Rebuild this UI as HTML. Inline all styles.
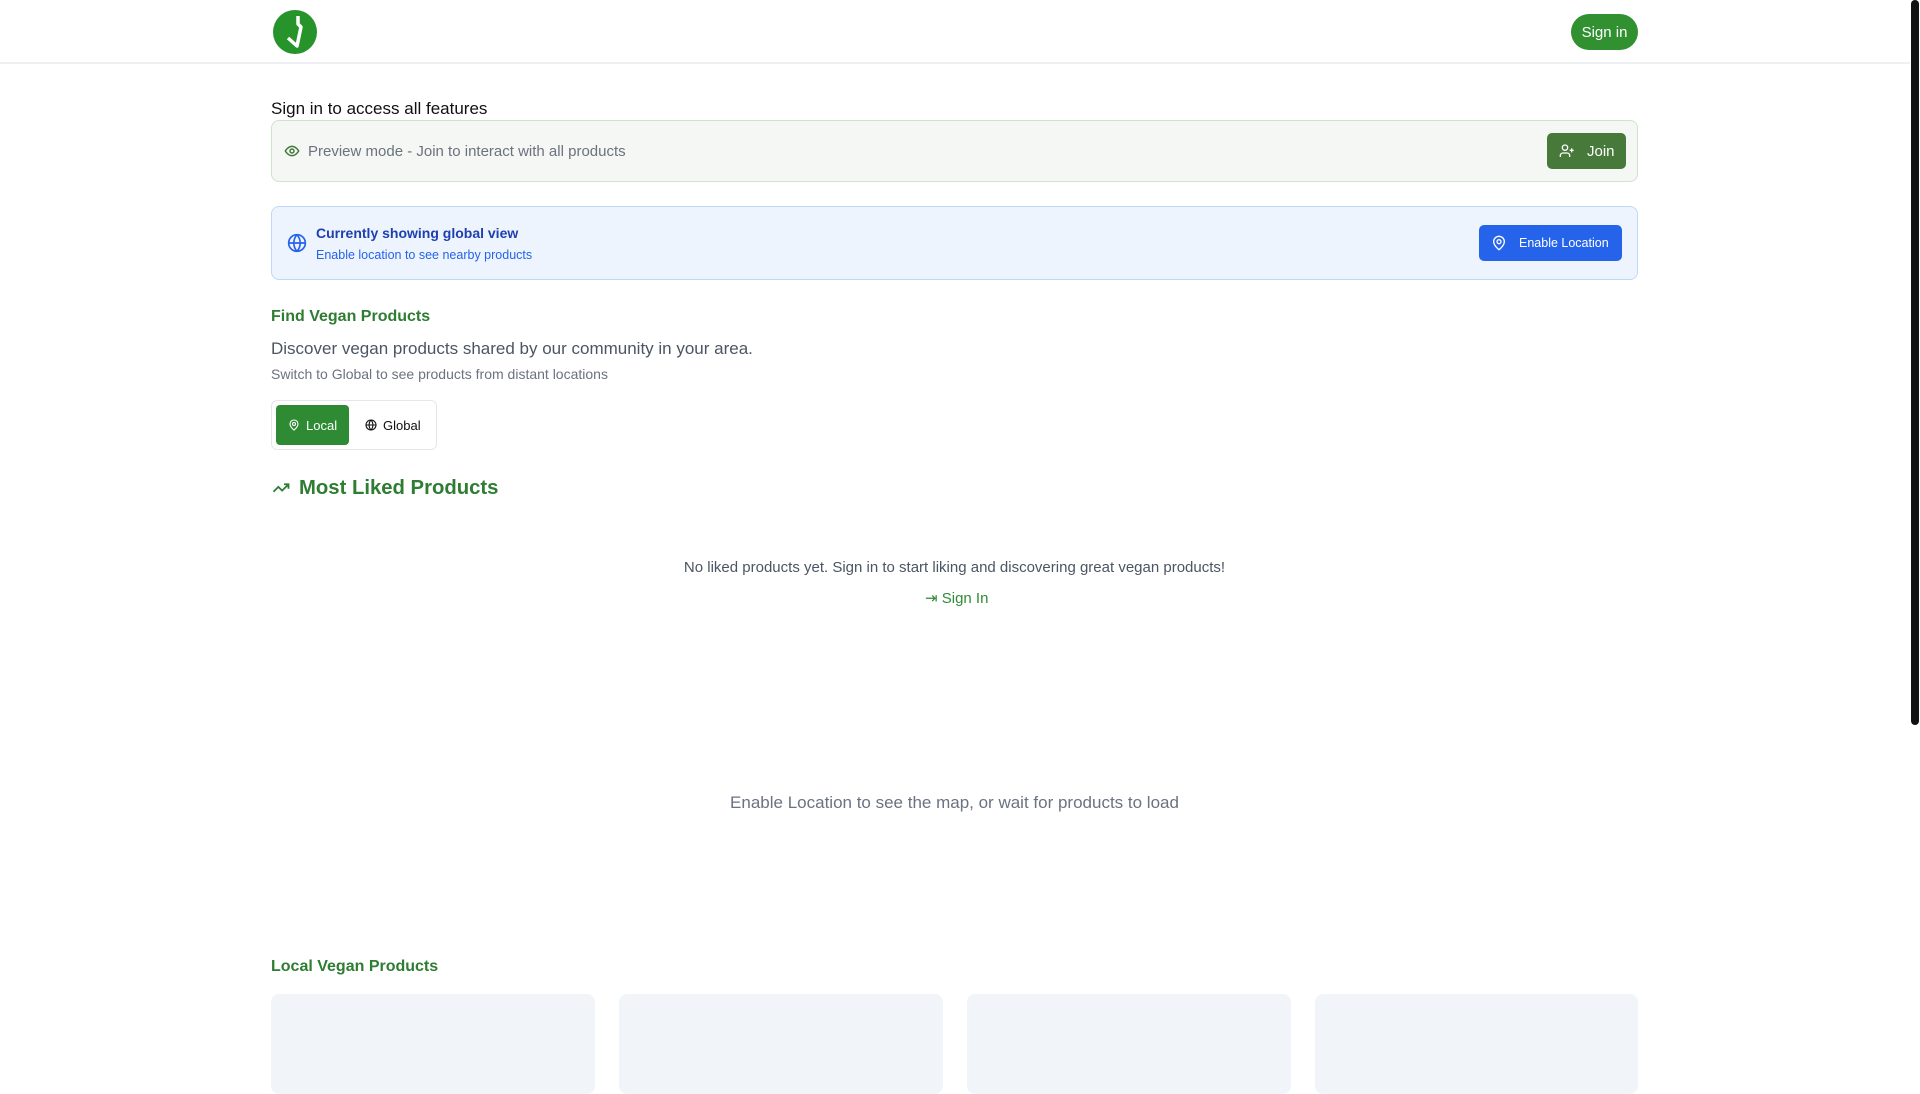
<!DOCTYPE html>
<html><head><meta charset="utf-8"><style>
*{box-sizing:border-box;margin:0;padding:0}
body{width:1920px;height:1080px;overflow:hidden;background:#fff;font-family:"Liberation Sans",sans-serif;position:relative}
.a{position:absolute}
.hdr{left:0;top:0;width:1910px;height:64px;border-bottom:2px solid #eef0f4}
.sb{left:1911px;top:0;width:8px;height:725px;background:#111;border-radius:4px}
.t{white-space:nowrap}
svg{display:block}
</style></head><body>
<div class="a hdr"></div>
<div class="a sb"></div>
<svg class="a" style="left:273px;top:10px" width="44" height="44" viewBox="0 0 44 44"><circle cx="22" cy="22" r="22" fill="#27932b"/><path d="M25 6 L25 14 L28 17 L24 36 L15 28" fill="none" stroke="#fff" stroke-width="3.5" stroke-linejoin="round"/></svg>
<div class="a t" style="left:1571px;top:14px;width:67px;height:36px;border-radius:18px;background:#319131;color:#fff;font-size:15px;line-height:37px;text-align:center">Sign in</div>

<div class="a t" style="left:271px;top:99px;font-size:17px;color:#111">Sign in to access all features</div>
<div class="a" style="left:271px;top:120px;width:1367px;height:62px;background:#f4f7f3;border:1px solid #cfe3cc;border-radius:8px"></div>
<svg class="a" style="left:284px;top:143px" width="16" height="16" viewBox="0 0 24 24" fill="none" stroke="#3f7a35" stroke-width="2.2"><path d="M2 12s4-7 10-7 10 7 10 7-4 7-10 7S2 12 2 12z"/><circle cx="12" cy="12" r="3"/></svg>
<div class="a t" style="left:308px;top:143px;font-size:15px;color:#6b7280">Preview mode - Join to interact with all products</div>
<div class="a" style="left:1547px;top:133px;width:79px;height:36px;background:#47793a;border-radius:5px"></div>
<svg class="a" style="left:1559px;top:143px" width="16" height="16" viewBox="0 0 24 24" fill="none" stroke="#fff" stroke-width="2"><circle cx="9" cy="7" r="4"/><path d="M2 21v-2a4 4 0 0 1 4-4h6a4 4 0 0 1 4 4v2M19 8v6M16 11h6"/></svg>
<div class="a t" style="left:1587px;top:143px;font-size:15px;color:#fff">Join</div>

<div class="a" style="left:271px;top:206px;width:1367px;height:74px;background:#eef4fe;border:1px solid #bfd7fb;border-radius:8px"></div>
<svg class="a" style="left:287px;top:233px" width="20" height="20" viewBox="0 0 24 24" fill="none" stroke="#2563eb" stroke-width="2"><circle cx="12" cy="12" r="10"/><path d="M2 12h20M12 2a15 15 0 0 1 0 20M12 2a15 15 0 0 0 0 20"/></svg>
<div class="a t" style="left:316px;top:225px;font-size:14px;font-weight:bold;color:#1e40af">Currently showing global view</div>
<div class="a t" style="left:316px;top:248px;font-size:12.5px;color:#2563eb">Enable location to see nearby products</div>
<div class="a" style="left:1479px;top:225px;width:143px;height:36px;background:#2563eb;border-radius:5px"></div>
<svg class="a" style="left:1491px;top:235px" width="16" height="16" viewBox="0 0 24 24" fill="none" stroke="#fff" stroke-width="2"><path d="M20 10c0 6-8 12-8 12s-8-6-8-12a8 8 0 0 1 16 0z"/><circle cx="12" cy="10" r="3"/></svg>
<div class="a t" style="left:1519px;top:236px;font-size:12.5px;color:#fff">Enable Location</div>

<div class="a t" style="left:271px;top:308px;font-size:16px;font-weight:bold;color:#2e7d32">Find Vegan Products</div>
<div class="a t" style="left:271px;top:339px;font-size:17px;color:#4b5563">Discover vegan products shared by our community in your area.</div>
<div class="a t" style="left:271px;top:366px;font-size:14px;color:#6b7280">Switch to Global to see products from distant locations</div>
<div class="a" style="left:271px;top:400px;width:166px;height:50px;border:1px solid #e5e7eb;border-radius:6px"></div>
<div class="a" style="left:276px;top:405px;width:73px;height:40px;background:#2e8b34;border-radius:4px"></div>
<svg class="a" style="left:288px;top:419px" width="12" height="12" viewBox="0 0 24 24" fill="none" stroke="#fff" stroke-width="2.2"><path d="M20 10c0 6-8 12-8 12s-8-6-8-12a8 8 0 0 1 16 0z"/><circle cx="12" cy="10" r="3"/></svg>
<div class="a t" style="left:306px;top:418px;font-size:13px;color:#fff">Local</div>
<svg class="a" style="left:365px;top:419px" width="12" height="12" viewBox="0 0 24 24" fill="none" stroke="#111" stroke-width="2.2"><circle cx="12" cy="12" r="10"/><path d="M2 12h20M12 2a15 15 0 0 1 0 20M12 2a15 15 0 0 0 0 20"/></svg>
<div class="a t" style="left:383px;top:418px;font-size:13px;color:#111">Global</div>

<svg class="a" style="left:271px;top:479px" width="20" height="18" viewBox="0 0 24 24" fill="none" stroke="#2e7d32" stroke-width="2.4"><path d="M22 7l-8.5 8.5-5-5L2 17M16 7h6v6"/></svg>
<div class="a t" style="left:299px;top:477px;font-size:20.3px;font-weight:bold;color:#2e7d32">Most Liked Products</div>
<div class="a t" style="left:0;width:1909px;top:559px;text-align:center;font-size:15px;color:#4b5563">No liked products yet. Sign in to start liking and discovering great vegan products!</div>
<div class="a t" style="left:925px;top:589px;font-size:15px;color:#2e8b34">&#8677; Sign In</div>
<div class="a t" style="left:0;width:1909px;top:793px;text-align:center;font-size:17px;color:#6b7280">Enable Location to see the map, or wait for products to load</div>

<div class="a t" style="left:271px;top:958px;font-size:16px;font-weight:bold;color:#2e7d32">Local Vegan Products</div>
<div class="a" style="left:271px;top:994px;width:324px;height:100px;background:#f1f4f8;border-radius:8px"></div>
<div class="a" style="left:619px;top:994px;width:324px;height:100px;background:#f1f4f8;border-radius:8px"></div>
<div class="a" style="left:967px;top:994px;width:324px;height:100px;background:#f1f4f8;border-radius:8px"></div>
<div class="a" style="left:1315px;top:994px;width:323px;height:100px;background:#f1f4f8;border-radius:8px"></div>
</body></html>
